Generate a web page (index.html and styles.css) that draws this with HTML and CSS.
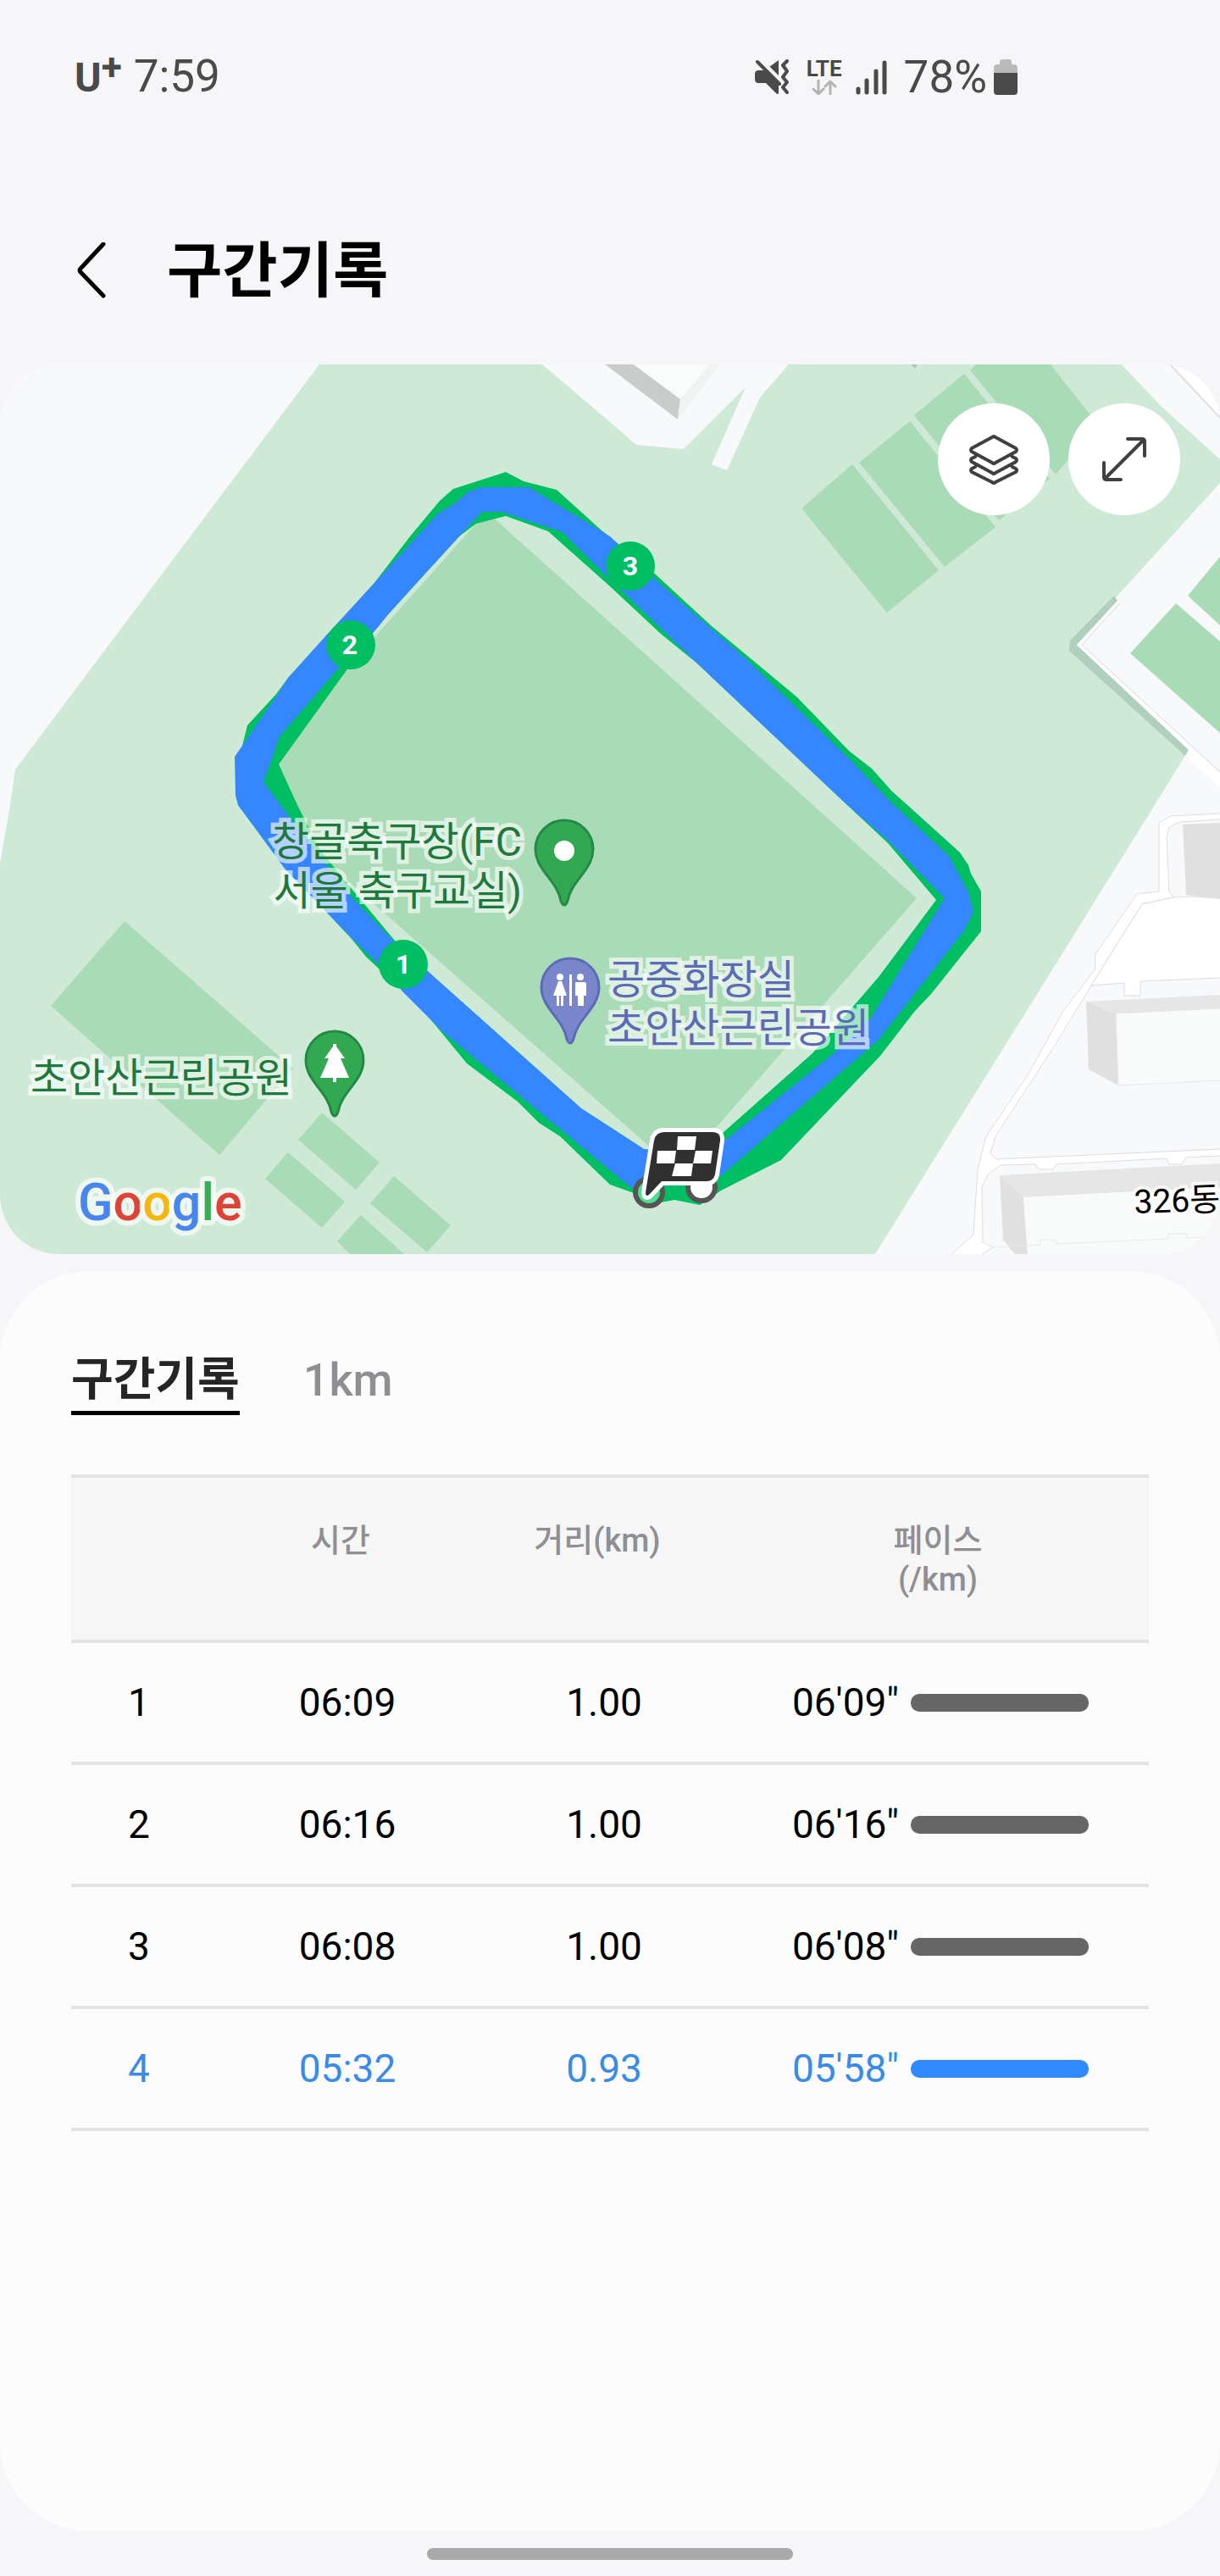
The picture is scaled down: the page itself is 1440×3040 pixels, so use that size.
FILE: index.html
```html
<!DOCTYPE html>
<html lang="ko">
<head>
  <meta charset="UTF-8">
  <meta name="viewport" content="width=device-width, initial-scale=1">
  <title>구간기록</title>
  <link rel="stylesheet" href="styles.css">
</head>
<body>

  <!-- Status bar -->
  <div class="status-bar">
    <div class="status-left">
      <span class="carrier">U<sup>+</sup></span>
      <span class="clock">7:59</span>
    </div>
    <div class="status-right">
      <svg class="icon-mute" width="42" height="42" viewBox="0 0 42 42" aria-hidden="true">
        <path d="M29 1v19L18 9zM6 13h6l17 17v9c0 2-1 3-3 1L14 28H6c-4 0-5-2-5-5v-5c0-3 1-5 5-5z" fill="#4a4a4a"/>
        <path d="M4 3l26 26" stroke="#f6f6f9" stroke-width="4" transform="translate(3 -3)"/>
        <path d="M4 3l26 26M39 2l-5 5 5 7-5 7 5 6-5 6 5 6" fill="none" stroke="#4a4a4a" stroke-width="4" stroke-linecap="round" stroke-linejoin="round"/>
      </svg>
      <span class="network">
        <span class="network-name">LTE</span>
        <svg width="30" height="18" viewBox="0 0 30 18" aria-hidden="true">
          <path d="M8 1v15M2 11l6 6 6-6M22 17V2M16 8l6-6 6 6" fill="none" stroke="#b4b4b4" stroke-width="3" stroke-linecap="round" stroke-linejoin="round"/>
        </svg>
      </span>
      <svg class="icon-signal" width="37" height="42" viewBox="0 0 37 42" aria-hidden="true">
        <path d="M3 35v4M13 25v14M24 14v25M34 4v35" stroke="#4a4a4a" stroke-width="5" stroke-linecap="round"/>
      </svg>
      <span class="battery-level">78%</span>
      <svg class="icon-battery" width="28" height="42" viewBox="0 0 28 42" aria-hidden="true">
        <path d="M0 16v-6c0-3 2-4 4-4h3V3c0-2 1-3 3-3h8c2 0 3 1 3 3v3h3c2 0 4 1 4 4v6z" fill="#bababa"/>
        <path d="M0 16h28v22c0 3-2 4-4 4H4c-2 0-4-1-4-4z" fill="#4a4a4a"/>
      </svg>
    </div>
  </div>

  <header class="page-header">
    <button class="back-btn" aria-label="뒤로">
      <svg width="42" height="68" viewBox="0 0 42 68" aria-hidden="true">
        <path d="M35 2L8 31q-2 2 0 4l27 28" fill="none" stroke="#000" stroke-width="5" stroke-linecap="round"/>
      </svg>
    </button>
    <h1>구간기록</h1>
  </header>

  <!-- Map with the recorded route -->
  <section class="map" aria-label="지도">
    <svg class="map-canvas" viewBox="0 430 1440 1050">
      <rect y="430" width="1440" height="1050" fill="#f8f9fb"/>

      <!-- park -->
      <path fill="#ceead7" d="M377 430L18 908L12 950L0 1019V1480H1033L1363 950L1403 885L1271 761L1319 703L1440 570V542L1370 479L1324 430H931L897 469L858 555L840 548L880 457L807 530L751 525L720 498L640 430Z"/>

      <!-- courts and fields -->
      <g fill="#a8dbb6">
        <path d="M577 606L1082 1060L844 1332L800 1383L720 1312L284 928L441 753L561 619Z"/>
        <path d="M1006 548L946 600L1047 723L1108 673Z"/>
        <path d="M1014 546L1074 497L1175 622L1115 669Z"/>
        <path d="M1079 490L1138 441L1239 565L1179 614Z"/>
        <path d="M1145 437L1152 430H1240L1296 501L1246 560Z"/>
        <path d="M1440 657L1402 703L1440 738Z"/>
        <path d="M1388 712L1334 771L1440 865V757Z"/>
        <path d="M147 1087L60 1187L259 1363L346 1261Z"/>
        <path d="M380 1313L352 1345L420 1404L448 1372Z"/>
        <path d="M340 1360L313 1391L380 1449L407 1418Z"/>
        <path d="M465 1388L437 1420L504 1478L532 1446Z"/>
        <path d="M426 1434L398 1465L413 1480H477Z"/>
      </g>

      <!-- building at the top -->
      <path d="M714 430H748L803 471L800 495Z" fill="#cacbcb"/>
      <path d="M748 430L803 471L838 430Z" fill="#fafcfb"/>
      <path d="M803 471L838 430H850L800 495Z" fill="#f1f2f2"/>
      <path d="M1075 430L1080 435L1083 430Z" fill="#b5c4bb"/>
      <path d="M1381 430L1440 493V430Z" fill="#fff" stroke="#dedfe2" stroke-width="2"/>

      <!-- wall on the right -->
      <path d="M1315 703L1263 756L1262 768L1399 892L1403 885L1271 761L1319 709Z" fill="#b1cfbd"/>
      <path d="M1319 709L1322 711L1277 761L1440 911V930L1399 892L1403 885L1271 761Z" fill="#fff"/>
      <path d="M1322 711L1277 761L1440 911" fill="none" stroke="#d6d7da"/>

      <!-- roads -->
      <g fill="#fff" stroke="#dcdde0">
        <path d="M1441 960L1381 963L1368 971V1052L1342 1055L1293 1126L1292 1145L1255 1193L1214 1267L1164 1341L1154 1380L1149 1457L1122 1481H1158L1172 1472L1160 1466L1159 1401L1166 1386L1181 1375L1222 1374L1226 1380H1243L1247 1374L1377 1367L1380 1374H1395L1400 1366L1441 1364V1356L1175 1368L1169 1361L1175 1341L1220 1272L1246 1232L1288 1163L1348 1067L1385 1059L1380 1052L1377 988L1380 976L1393 970L1441 967Z"/>
        <path d="M1348 1067L1385 1059L1404 1058L1441 1060V1154L1346 1158V1175H1327V1160L1288 1163Z"/>
      </g>

      <!-- apartment blocks -->
      <path d="M1396 973L1440 971V1061L1400 1056Z" fill="#e0e0e0"/>
      <path d="M1282 1182L1317 1196L1320 1281L1285 1262Z" fill="#e0e0e0"/>
      <path d="M1282 1182L1440 1174V1190L1317 1196Z" fill="#e5e6e5"/>
      <path d="M1317 1196L1441 1190V1275L1320 1281Z" fill="#f9fbfa" stroke="#e6e8e7"/>
      <path d="M1180 1387L1208 1413L1213 1480H1198L1184 1463Z" fill="#e0e0e0"/>
      <path d="M1180 1387L1440 1373V1401L1208 1413Z" fill="#e5e6e5"/>
      <path d="M1208 1413L1440 1401V1480H1213Z" fill="#f9fbfa"/>
      <path d="M1172 1472L1228 1469V1463H1246V1468L1379 1462V1456H1401V1461L1440 1459" fill="none" stroke="#e8e9ea"/>

      <!-- route -->
      <path fill="#00bf63" fill-rule="evenodd" d="M597 557L618 568L657 578L709 625L774 678L839 738L940 822L1002 886L1029 907L1053 934L1071 950L1133 1006L1143 1021L1146 1031L1158 1052V1099L1099 1173L1080 1193L1039 1246L922 1369L851 1405L826 1422L796 1416L780 1419L720 1398L661 1341L636 1325L611 1300L551 1255L500 1193L475 1169L432 1129L415 1108L386 1077L337 1026L281 950L286 880L292 856L326 819L340 800L386 749L441 689L484 633L519 591L535 577Z
        M597 609L647 627L720 692L780 748L823 783L1000 950L1048 995L1105 1062L1037 1153L959 1243L853 1337L820 1368L767 1357L760 1356L720 1330L686 1308L507 1148L466 1110L416 1050L377 1002L351 950L329 902L409 791L441 746L459 724L542 633L562 618Z"/>
      <path fill="#3687ff" fill-rule="evenodd" d="M569 575H624L720 633L777 687L881 778L1007 900L1055 950L1120 1010L1143 1053L1149 1076L1138 1098L1037 1227L846 1392L810 1396L748 1404L720 1381L523 1218L475 1170L448 1139L415 1107L386 1077L337 1026L281 950L278 939L277 893L286 880L328 819L340 800L386 749L441 689L517 606L537 594L553 580Z
        M569 604H592L664 628L716 680L736 699L789 750L823 783L1000 950L1046 990L1115 1060L1028 1201L984 1243L853 1348L820 1368L767 1357L760 1356L720 1330L686 1308L507 1148L466 1112L416 1060L331 950L311 923L330 869L399 789L441 746L459 724L542 633Z"/>

      <!-- kilometre markers -->
      <g class="km-marker">
        <circle cx="476" cy="1138" r="29"/>
        <circle cx="414" cy="761" r="29"/>
        <circle cx="744" cy="668" r="29"/>
        <text x="476" y="1149">1</text>
        <text x="413" y="772">2</text>
        <text x="744" y="679">3</text>
      </g>

      <!-- start and finish -->
      <circle cx="766" cy="1407" r="16" fill="#4fdd8d" stroke="#555" stroke-width="6"/>
      <circle cx="828" cy="1401" r="16" fill="#fff" stroke="#555" stroke-width="6"/>
      <path d="M784 1336H841Q851 1336 850 1346L844 1386Q842 1394 834 1394H781L766 1410Q762 1413 762 1407L772 1346Q774 1336 784 1336Z" fill="#303030" stroke="#fff" stroke-width="10" stroke-linejoin="round" paint-order="stroke"/>
      <path fill="#fff" d="M800 1341H822L820 1357H799ZM776 1358H798L796 1373H775ZM821 1358H841L839 1373H818ZM797 1373H818L816 1388H793Z"/>

      <!-- places -->
      <g transform="translate(666 1069)">
        <path class="pin pin-green" d="M0-1C-2-1-3-3-4-6C-8-30-34-42-34-67A34 34 0 0 1 34-67C34-42 8-30 4-6C3-3 2-1 0-1Z"/>
        <circle cy="-65" r="12" fill="#fff"/>
      </g>
      <g transform="translate(395 1318)">
        <path class="pin pin-green" d="M0-1C-2-1-3-3-4-6C-8-30-34-42-34-67A34 34 0 0 1 34-67C34-42 8-30 4-6C3-3 2-1 0-1Z"/>
        <path fill="#fff" d="M-2-86H2V-83L12-69H7L17-46H2V-41H-2V-46H-17L-7-69H-12L-2-83Z"/>
      </g>
      <g transform="translate(673 1232)">
        <path class="pin pin-blue" d="M0-1C-2-1-3-3-4-6C-8-30-34-42-34-67A34 34 0 0 1 34-67C34-42 8-30 4-6C3-3 2-1 0-1Z"/>
        <circle cx="-12" cy="-79" r="4" fill="#fff"/>
        <circle cx="12" cy="-79" r="4" fill="#fff"/>
        <path fill="#fff" d="M-1-82H2V-45H-1ZM-14-74H-10L-4-57H-8V-45H-11V-57H-13V-45H-16V-57H-20ZM7-73H17Q19-73 19-71V-57H16V-45H9V-57H6V-71Q6-73 7-73Z"/>
      </g>

      <g class="place-label">
        <text class="place-green" text-anchor="end" x="616" y="1010">창골축구장(FC</text>
        <text class="place-green" text-anchor="end" x="616" y="1068">서울 축구교실)</text>
        <text class="place-green" text-anchor="end" x="345" y="1289">초안산근린공원</text>
        <text class="place-blue" x="717" y="1173">공중화장실</text>
        <text class="place-blue" x="717" y="1230">초안산근린공원</text>
      </g>
      <text class="building-label" x="1339" y="1432" transform="rotate(-2 1339 1432)">326동</text>

      <text class="google" x="92" y="1440"><tspan fill="#4885ed">G</tspan><tspan fill="#db4437">o</tspan><tspan fill="#f4b70f">o</tspan><tspan fill="#4885ed">g</tspan><tspan fill="#3caa58">l</tspan><tspan fill="#db4437">e</tspan></text>
    </svg>

    <div class="map-actions">
      <button class="map-btn" aria-label="지도 유형">
        <svg width="60" height="62" viewBox="0 0 60 62" aria-hidden="true">
          <path d="M28 5Q30 3 32 5L56 18Q58 20 56 22L32 35Q30 37 28 35L4 22Q2 20 4 18ZM8 28L4 30Q2 32 4 34L28 47Q30 49 32 47L56 34Q58 32 56 30L52 28M8 40L4 42Q2 44 4 46L28 58Q30 60 32 58L56 46Q58 44 56 42L52 40"/>
        </svg>
      </button>
      <button class="map-btn" aria-label="지도 확대">
        <svg width="56" height="56" viewBox="0 0 56 56" aria-hidden="true">
          <path d="M5 51L51 5M32 4H49Q52 4 52 7V24M4 32V49Q4 52 7 52H24"/>
        </svg>
      </button>
    </div>
  </section>

  <!-- Lap records -->
  <main class="records">
    <div class="tabs" role="tablist">
      <button class="tab active" role="tab" aria-selected="true">구간기록</button>
      <button class="tab" role="tab" aria-selected="false">1km</button>
    </div>

    <table class="lap-table">
      <colgroup>
        <col class="col-lap">
        <col class="col-time">
        <col class="col-distance">
        <col>
      </colgroup>
      <thead>
        <tr>
          <th></th>
          <th scope="col">시간</th>
          <th scope="col">거리(km)</th>
          <th scope="col">페이스<br>(/km)</th>
        </tr>
      </thead>
      <tbody>
        <tr>
          <td>1</td>
          <td>06:09</td>
          <td>1.00</td>
          <td><div class="pace">06'09"<span class="pace-bar"></span></div></td>
        </tr>
        <tr>
          <td>2</td>
          <td>06:16</td>
          <td>1.00</td>
          <td><div class="pace">06'16"<span class="pace-bar"></span></div></td>
        </tr>
        <tr>
          <td>3</td>
          <td>06:08</td>
          <td>1.00</td>
          <td><div class="pace">06'08"<span class="pace-bar"></span></div></td>
        </tr>
        <tr class="best">
          <td>4</td>
          <td>05:32</td>
          <td>0.93</td>
          <td><div class="pace">05'58"<span class="pace-bar"></span></div></td>
        </tr>
      </tbody>
    </table>
  </main>

  <div class="home-indicator"><span></span></div>

</body>
</html>
```
FILE: styles.css
```css
* {
  box-sizing: border-box;
}

body {
  margin: 0;
  min-height: 100vh;
  display: flex;
  flex-direction: column;
  background-color: #f6f6f9;
  color: #000;
  font-family: Roboto, "Noto Sans CJK KR", sans-serif;
}

button {
  padding: 0;
  border: none;
  background: none;
  font-family: inherit;
  cursor: pointer;
}

svg {
  display: block;
}

/* Status bar */
.status-bar {
  display: flex;
  justify-content: space-between;
  align-items: center;
  padding: 59px 239px 0 88px;
  color: #4a4a4a;
  font-size: 53px;
  line-height: 62px;
}

.status-left,
.status-right {
  display: flex;
  align-items: center;
}

.status-left {
  align-items: baseline;
  gap: 14px;
}

.carrier {
  font-size: 48px;
  font-weight: 700;
}

.carrier sup {
  font-size: 44px;
  line-height: 0;
  vertical-align: 14px;
}

.network {
  display: flex;
  flex-direction: column;
  align-items: center;
  gap: 2px;
  margin: 0 16px 0 20px;
}

.network-name {
  font-size: 26px;
  line-height: 22px;
  font-weight: 700;
}

.battery-level {
  margin: 0 8px 0 20px;
}

/* Header */
.page-header {
  display: flex;
  align-items: center;
  gap: 68px;
  padding: 147px 87px 60px;
}

.page-header h1 {
  margin: 0;
  font-size: 71px;
  line-height: 100px;
  font-weight: 700;
}

/* Map */
.map {
  position: relative;
  overflow: hidden;
  border-radius: 70px;
}

.map-canvas {
  width: 100%;
  height: auto;
}

.map-actions {
  position: absolute;
  top: 46px;
  right: 47px;
  display: flex;
  gap: 22px;
}

.map-btn {
  display: flex;
  align-items: center;
  justify-content: center;
  width: 132px;
  height: 132px;
  border-radius: 50%;
  background-color: #fff;
}

.map-btn path {
  fill: none;
  stroke: #404040;
  stroke-width: 4;
  stroke-linecap: round;
  stroke-linejoin: round;
}

.km-marker circle {
  fill: #00bf63;
}

.km-marker text {
  fill: #fff;
  font-size: 32px;
  font-weight: 700;
  text-anchor: middle;
}

.pin {
  stroke-width: 3;
}

.pin-green {
  fill: #33a852;
  stroke: #238a43;
}

.pin-blue {
  fill: #7986cb;
  stroke: #5c6bb5;
}

.place-label {
  font-size: 48px;
  stroke: rgba(255, 255, 255, 0.65);
  stroke-width: 10px;
  stroke-linejoin: miter;
  paint-order: stroke;
}

.place-green {
  fill: #21783d;
}

.place-blue {
  fill: #5c6bb5;
}

.building-label {
  font-size: 39px;
  stroke: rgba(255, 255, 255, 0.7);
  stroke-width: 8px;
  paint-order: stroke;
}

.google {
  font-size: 61px;
  font-weight: 500;
  stroke: rgba(255, 255, 255, 0.65);
  stroke-width: 12px;
  stroke-linejoin: round;
  paint-order: stroke;
}

/* Records */
.records {
  flex: 1;
  margin-top: 20px;
  padding: 92px 84px;
  border-radius: 105px;
  background-color: #fcfcfd;
}

.tabs {
  display: flex;
  align-items: flex-start;
  gap: 75px;
  margin-bottom: 70px;
}

.tab {
  border-bottom: 5px solid transparent;
  color: #8f8f93;
  font-size: 54px;
  line-height: 73px;
  font-weight: 500;
}

.tab.active {
  border-color: #000;
  color: #252525;
  font-weight: 700;
}

.lap-table {
  width: 100%;
  table-layout: fixed;
  border-collapse: collapse;
}

.col-lap {
  width: 144px;
}

.col-time {
  width: 348px;
}

.col-distance {
  width: 258px;
}

.lap-table thead tr {
  border-top: 4px solid #e3e3e3;
  background-color: #f6f6f6;
}

.lap-table tr {
  border-bottom: 4px solid #e3e3e3;
}

.lap-table th {
  padding: 51px 0 48px;
  color: #8f8f93;
  font-size: 38px;
  line-height: 46px;
  font-weight: 500;
  vertical-align: top;
}

.lap-table td {
  padding: 40px 0 40px 16px;
  font-size: 46px;
  line-height: 60px;
  text-align: center;
}

.lap-table th:last-child {
  padding-left: 24px;
}

.lap-table td:last-child {
  padding-left: 30px;
}

.pace {
  display: flex;
  align-items: center;
  justify-content: center;
  gap: 14px;
}

.pace-bar {
  width: 210px;
  height: 21px;
  border-radius: 10px;
  background-color: #666;
}

.best {
  color: #3a8be6;
}

.best .pace-bar {
  background-color: #2f8aff;
}

.home-indicator {
  display: flex;
  justify-content: center;
  padding: 20px 0 19px;
}

.home-indicator span {
  width: 30%;
  height: 14px;
  border-radius: 7px;
  background-color: #a9a9a9;
}
```
